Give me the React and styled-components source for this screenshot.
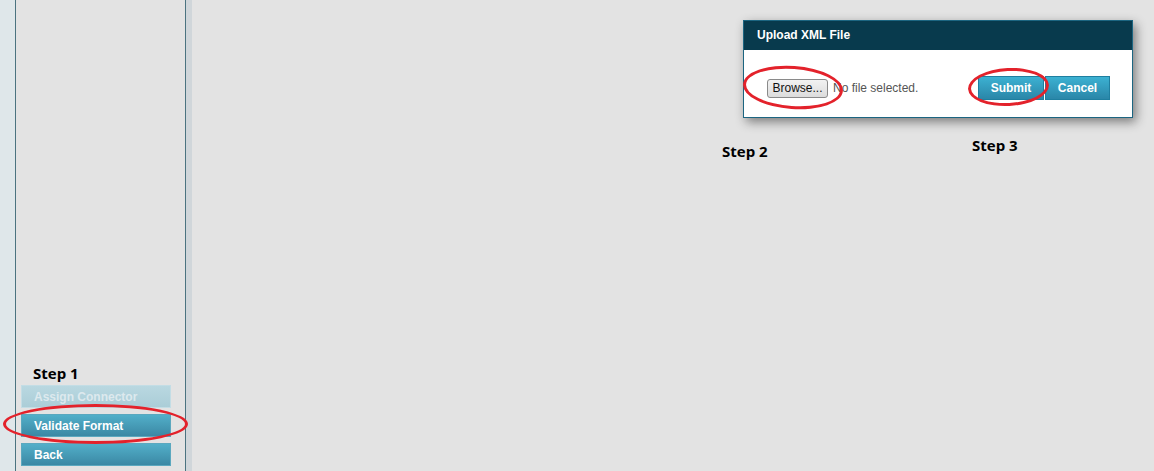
import styled, { createGlobalStyle } from "styled-components";

const GlobalStyle = createGlobalStyle`
  html, body {
    margin: 0;
    padding: 0;
    height: 100%;
    background: #e3e3e3;
  }
  #root {
    height: 471px;
  }
`;

const Page = styled.div`
  display: flex;
  height: 471px;
  overflow: hidden;
  font-family: "Liberation Sans", Arial, sans-serif;
`;

const Rail = styled.div`
  width: 15px;
  background: #dfe7ea;
  border-right: 1px solid #4b7380;
`;

const Sidebar = styled.aside`
  box-sizing: content-box;
  width: 150px;
  background: #e3e3e3;
  border-right: 1px solid #4b7380;
  display: flex;
  flex-direction: column;
  justify-content: flex-end;
  padding: 0 14px 5px 5px;
  gap: 6px;
`;

const Gutter = styled.div`
  width: 6px;
  background: #d0d6da;
`;

const Main = styled.main`
  flex: 1;
  padding: 20px 0 0 530px;
`;

const StepLabel = styled.div`
  font-family: "Open Sans", "Noto Sans", sans-serif;
  font-weight: 700;
  font-size: 15px;
  color: #000;
  line-height: 18px;
  width: ${(p) => (p.$w ? `${p.$w}px` : "auto")};
  padding-left: ${(p) => p.$indent || 0}px;
  margin-top: ${(p) => p.$top || 0}px;
  margin-bottom: ${(p) => p.$bottom || 0}px;
`;

const Highlight = styled.div`
  position: relative;
`;

const Ring = styled.span`
  position: absolute;
  top: ${(p) => p.$t}px;
  bottom: ${(p) => p.$b}px;
  left: ${(p) => p.$l}px;
  right: ${(p) => p.$r}px;
  border: 3px solid #e3222b;
  border-radius: 50%;
  pointer-events: none;
  transform: rotate(${(p) => p.$rot || 0}deg);
`;

const NavButton = styled.button`
  display: block;
  width: 150px;
  height: 23px;
  padding: 0 0 0 12px;
  text-align: left;
  font-family: "Liberation Sans", Arial, sans-serif;
  font-weight: 700;
  font-size: 12px;
  color: ${(p) => (p.disabled ? "#dde9ee" : "#fff")};
  background: ${(p) =>
    p.disabled
      ? "linear-gradient(#b9d8e1, #abcdd7)"
      : "linear-gradient(#52afc9, #3b88a4)"};
  border: 1px solid ${(p) => (p.disabled ? "#c3dde5" : "#5ba8bf")};
  cursor: pointer;
`;

const Dialog = styled.div`
  margin-left: 21px;
  width: 388px;
  border: 1px solid #1c6581;
  background: #fff;
  box-shadow: 3px 4px 10px rgba(0, 0, 0, 0.45);
`;

const DialogHeader = styled.div`
  height: 29px;
  background: #083a4d;
  color: #fff;
  font-weight: 700;
  font-size: 12px;
  line-height: 29px;
  padding-left: 13px;
`;

const DialogBody = styled.div`
  height: 67px;
  box-sizing: border-box;
  display: flex;
  align-items: center;
  padding: 9px 22px 0 23px;
`;

const FilePicker = styled.div`
  display: flex;
  align-items: center;
  gap: 5px;
  flex: 1;
`;

const BrowseButton = styled.button`
  height: 19px;
  width: 61px;
  padding: 0;
  font-family: "Liberation Sans", Arial, sans-serif;
  font-size: 12px;
  color: #111;
  background: linear-gradient(#f2f2f2, #dcdcdc);
  border: 1px solid #8a8a8a;
  border-radius: 3px;
`;

const FileStatus = styled.span`
  font-size: 12px;
  color: #555;
`;

const Actions = styled.div`
  display: flex;
  gap: 1px;
`;

const ActionButton = styled.button`
  height: 24px;
  width: ${(p) => p.$w}px;
  padding: 0;
  font-family: "Liberation Sans", Arial, sans-serif;
  font-weight: 700;
  font-size: 12px;
  color: #fff;
  background: linear-gradient(#3cb1d2, #2a86a8);
  border: 1px solid #1f7fa0;
`;

const StepsRow = styled.div`
  display: flex;
  align-items: flex-start;
`;

export default function App() {
  return (
    <>
      <GlobalStyle />
      <Page>
        <Rail />
        <Sidebar>
          <StepLabel $indent={12} $bottom={-3}>Step 1</StepLabel>
          <NavButton disabled>Assign Connector</NavButton>
          <Highlight>
            <NavButton>Validate Format</NavButton>
            <Ring $t={-10} $b={-7} $l={-18} $r={-17} />
          </Highlight>
          <NavButton>Back</NavButton>
        </Sidebar>
        <Gutter />
        <Main>
          <Dialog>
            <DialogHeader>Upload XML File</DialogHeader>
            <DialogBody>
              <FilePicker>
                <Highlight>
                  <BrowseButton>Browse...</BrowseButton>
                  <Ring $t={-12} $b={-11} $l={-24} $r={-15} $rot={4} />
                </Highlight>
                <FileStatus>No file selected.</FileStatus>
              </FilePicker>
              <Actions>
                <Highlight>
                  <ActionButton $w={66}>Submit</ActionButton>
                  <Ring $t={-8} $b={-6} $l={-10} $r={-5} $rot={-3} />
                </Highlight>
                <ActionButton $w={65}>Cancel</ActionButton>
              </Actions>
            </DialogBody>
          </Dialog>
          <StepsRow>
            <StepLabel $top={24} $w={250}>Step 2</StepLabel>
            <StepLabel $top={18}>Step 3</StepLabel>
          </StepsRow>
        </Main>
      </Page>
    </>
  );
}
